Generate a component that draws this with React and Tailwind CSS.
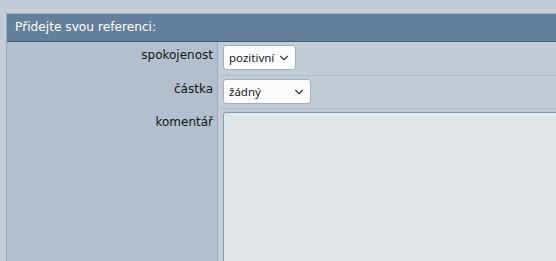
import { ChevronDown } from "lucide-react";

const labelFont = { fontFamily: '"DejaVu Sans", Verdana, sans-serif' };

function FakeSelect({ value, width }) {
  return (
    <div
      className={`flex h-[25px] items-center justify-between rounded-[3px] border border-[#a3afbc] bg-[#fbfcfd] pl-[5px] pr-[4px] text-[11.5px] text-[#1b1b1b] ${width}`}
      style={{ fontFamily: '"Noto Sans", "Open Sans", sans-serif' }}
    >
      <span className="leading-none">{value}</span>
      <ChevronDown className="h-[14px] w-[14px] text-[#3a3a3a]" strokeWidth={1.9} />
    </div>
  );
}

function Row({ label, children, className = "" }) {
  return (
    <div className={`grid grid-cols-[211px_1fr] ${className}`}>
      <div
        className="border-r border-[#9eabb9] bg-[#b3bfcc] pr-[4px] pt-[6px] text-right text-[12px] leading-[14px] text-[#161616]"
        style={labelFont}
      >
        {label}
      </div>
      <div className="pl-[5px] pt-[3px]">{children}</div>
    </div>
  );
}

export default function App() {
  return (
    <div className="h-[261px] w-[556px] overflow-hidden bg-[#c4cdd6] pl-[6px] pt-[13px]">
      <div className="w-[600px] border-l border-[#9dacbb]">
        <div
          className="flex h-[29px] items-center border-t border-b border-t-[#a9b4bf] border-b-[#465b71] bg-[#647f9a] pl-[8px] text-[12.2px] text-white"
          style={labelFont}
        >
          Přidejte svou referenci:
        </div>

        <Row label="spokojenost" className="h-[34px] border-b border-[#b2bdc8]">
          <FakeSelect value="pozitivní" width="w-[73px]" />
        </Row>

        <Row label="částka" className="h-[33px] border-b border-[#b2bdc8]">
          <FakeSelect value="žádný" width="w-[88px]" />
        </Row>

        <Row label="komentář" className="h-[180px]">
          <div className="h-[170px] w-[380px] rounded-tl-[3px] border border-[#8799ad] bg-[#e1e6ea]" />
        </Row>
      </div>
    </div>
  );
}
